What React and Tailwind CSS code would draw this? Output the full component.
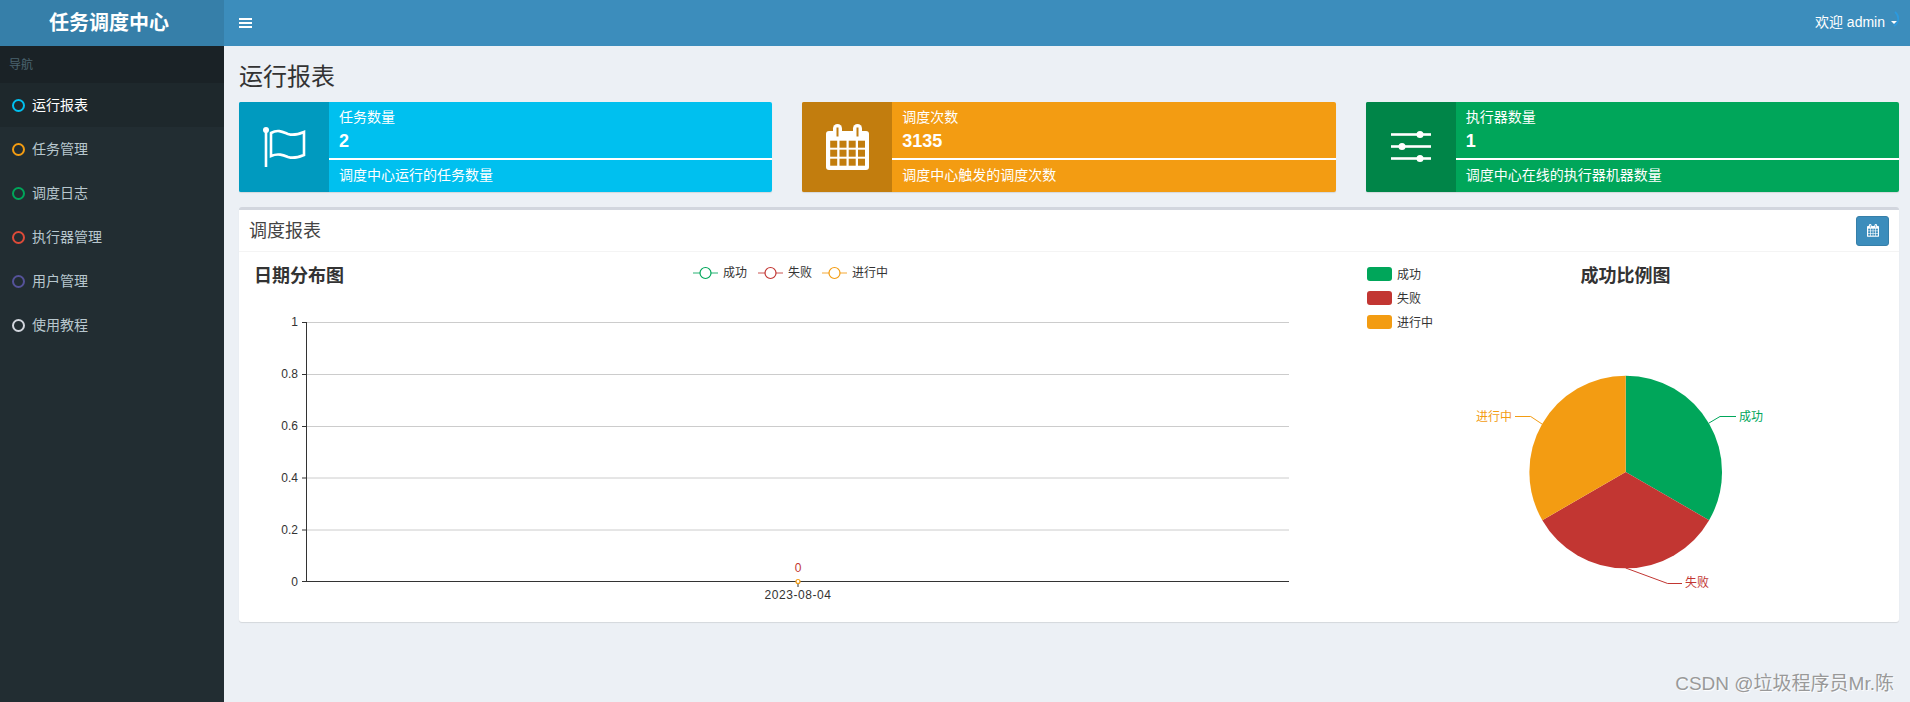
const font = { fontFamily: '"Liberation Sans", "Noto Sans CJK SC", sans-serif' };

const navItems = [
  { label: '运行报表', ring: 'border-[#00c0ef]', active: true },
  { label: '任务管理', ring: 'border-[#f39c12]' },
  { label: '调度日志', ring: 'border-[#00a65a]' },
  { label: '执行器管理', ring: 'border-[#dd4b39]' },
  { label: '用户管理', ring: 'border-[#555299]' },
  { label: '使用教程', ring: 'border-[#d2d6de]' },
];

function BarsIcon() {
  return (
    <svg width="13" height="10" viewBox="0 0 13 10" fill="#fff">
      <rect y="0" width="13" height="2" />
      <rect y="4" width="13" height="2" />
      <rect y="8" width="13" height="2" />
    </svg>
  );
}

function FlagIcon() {
  return (
    <svg width="44" height="42" viewBox="0 0 44 42" fill="none" stroke="#fff">
      <circle cx="4" cy="4" r="3" fill="#fff" stroke="none" />
      <path d="M4 4V41" strokeWidth="2.6" />
      <path d="M9 7C16 3 21 6 26 8C32 10 37 8 42 6V29C37 31 32 33 26 31C21 29 16 27 9 30Z" strokeWidth="2.6" />
    </svg>
  );
}

// dark cells are filled with the colour behind the icon
function CalendarIcon({ size, cut }) {
  const xs = [4.2, 13.5, 22.7, 32];
  const ys = [16.7, 25.7, 34.7];
  return (
    <svg width={size} height={size * 46 / 43} viewBox="0 0 43 46">
      <rect x="0" y="7" width="43" height="39" rx="3" fill="#fff" />
      <rect x="7" y="0" width="9" height="14" rx="4.5" fill="#fff" />
      <rect x="27" y="0" width="9" height="14" rx="4.5" fill="#fff" />
      <rect x="10.5" y="3.5" width="2" height="9" fill={cut} />
      <rect x="30.5" y="3.5" width="2" height="9" fill={cut} />
      {ys.map((y) => xs.map((x) => <rect key={x + '-' + y} x={x} y={y} width="7" height="7" fill={cut} />))}
    </svg>
  );
}

function SlidersIcon() {
  return (
    <svg width="40" height="36" viewBox="0 0 40 36" fill="#fff">
      <rect x="0" y="4.2" width="40" height="2.6" />
      <rect x="0" y="16.2" width="40" height="2.6" />
      <rect x="0" y="28.2" width="40" height="2.6" />
      <circle cx="29" cy="5.5" r="3.5" />
      <circle cx="11" cy="17.5" r="3.5" />
      <circle cx="29" cy="29.5" r="3.5" />
    </svg>
  );
}

function InfoBox({ bg, iconBg, icon, title, value, desc }) {
  return (
    <div className={`flex h-[90px] overflow-hidden rounded-[2px] text-white shadow-[0_1px_1px_rgba(0,0,0,0.1)] ${bg}`}>
      <div className={`flex w-[90px] shrink-0 items-center justify-center ${iconBg}`}>{icon}</div>
      <div className="flex min-w-0 flex-1 flex-col">
        <div className="h-[26px] px-[10px] pt-[5px] text-[14px] leading-[20px]">{title}</div>
        <div className="h-[30px] px-[10px] pt-[1px] text-[18px] font-bold leading-[25px]">{value}</div>
        <div className="h-[2px] bg-white" />
        <div className="px-[10px] pt-[5px] text-[14px] leading-[20px]">{desc}</div>
      </div>
    </div>
  );
}

function LegendMark({ x, color }) {
  return (
    <g stroke={color} fill="#fff" strokeWidth="1.2">
      <path d={`M${x} 273H${x + 25}`} opacity="0.7" />
      <circle cx={x + 12.5} cy="273" r="5.5" />
    </g>
  );
}

function LineChart() {
  const ticks = [
    ['1', 322],
    ['0.8', 374],
    ['0.6', 426],
    ['0.4', 477.5],
    ['0.2', 529.5],
  ];
  return (
    <svg className="block h-[370px] w-[1111px]" viewBox="249 252 1111 370" style={font}>
      <text x="254" y="282" fontSize="18" fontWeight="700" fill="#333">日期分布图</text>

      <LegendMark x={693} color="#00a65a" />
      <text x="723" y="277" fontSize="12" fill="#333">成功</text>
      <LegendMark x={758} color="#c23632" />
      <text x="788" y="277" fontSize="12" fill="#333">失败</text>
      <LegendMark x={822} color="#f39c12" />
      <text x="852" y="277" fontSize="12" fill="#333">进行中</text>

      {ticks.map(([label, y]) => (
        <g key={label}>
          <path d={`M307 ${y + 0.5}H1289`} stroke="#ccc" />
          <path d={`M302 ${y + 0.5}H307`} stroke="#333" />
          <text x="298" y={y + 4} fontSize="12" fill="#333" textAnchor="end">{label}</text>
        </g>
      ))}
      <path d="M306.5 322V582" stroke="#333" />
      <path d="M302 581.5H1289" stroke="#333" />
      <path d="M798 582V587" stroke="#333" />
      <text x="298" y="585.5" fontSize="12" fill="#333" textAnchor="end">0</text>
      <circle cx="798" cy="581.5" r="2" fill="#fff" stroke="#f39c12" strokeWidth="1.2" />
      <text x="798" y="572" fontSize="12" fill="#c23632" textAnchor="middle">0</text>
      <text x="798" y="599" fontSize="12" letterSpacing="0.55" fill="#333" textAnchor="middle">2023-08-04</text>
    </svg>
  );
}

function PieChart() {
  const legend = [
    ['成功', '#00a65a', 267],
    ['失败', '#c23632', 291],
    ['进行中', '#f39c12', 315],
  ];
  return (
    <svg className="block h-[370px] w-[539px]" viewBox="1360 252 539 370" style={font}>
      {legend.map(([label, color, y]) => (
        <g key={label}>
          <rect x="1367" y={y} width="25" height="14" rx="3" fill={color} />
          <text x="1397" y={y + 11.5} fontSize="12" fill="#333">{label}</text>
        </g>
      ))}
      <text x="1625.5" y="282" fontSize="18" fontWeight="700" fill="#333" textAnchor="middle">成功比例图</text>

      <path d="M1625.7 472V375.7A96.3 96.3 0 0 1 1709.1 520.2Z" fill="#00a65a" />
      <path d="M1625.7 472L1709.1 520.2A96.3 96.3 0 0 1 1542.3 520.2Z" fill="#c23632" />
      <path d="M1625.7 472L1542.3 520.2A96.3 96.3 0 0 1 1625.7 375.7Z" fill="#f39c12" />

      <path d="M1709 423L1720 416.5H1736" fill="none" stroke="#00a65a" />
      <text x="1739" y="420.5" fontSize="12" fill="#00a65a">成功</text>
      <path d="M1625.7 568L1667.7 583.5H1682" fill="none" stroke="#c23632" />
      <text x="1685" y="587" fontSize="12" fill="#c23632">失败</text>
      <path d="M1542 424L1530.7 416.5H1515" fill="none" stroke="#f39c12" />
      <text x="1476" y="420.5" fontSize="12" fill="#f39c12">进行中</text>
    </svg>
  );
}

export default function App() {
  return (
    <div className="flex h-[702px] w-[1910px] overflow-hidden bg-[#ecf0f5] text-[#333]" style={font}>
      {/* Sidebar */}
      <aside className="flex w-[224px] shrink-0 flex-col bg-[#222d32]">
        <div className="flex h-[46px] items-center justify-center bg-[#367fa9] pr-[6px] text-[20px] font-bold text-white">
          任务调度中心
        </div>
        <div className="flex h-[37px] items-center bg-[#1a2226] pl-[9px] text-[12px] text-[#4b646f]">导航</div>
        {navItems.map((item) => (
          <div
            key={item.label}
            className={`flex h-[44px] items-center gap-[7px] pl-[12px] text-[14px] ${item.active ? 'bg-[#1e282c] text-white' : 'text-[#b8c7ce]'}`}
          >
            <span className={`h-[13px] w-[13px] rounded-full border-2 ${item.ring}`} />
            {item.label}
          </div>
        ))}
      </aside>

      <div className="relative flex min-w-0 flex-1 flex-col">
        {/* Top bar */}
        <header className="relative flex h-[46px] items-center justify-between bg-[#3c8dbc] pl-[15px] pr-[13px] text-white">
          <BarsIcon />
          <div className="flex -translate-y-[1px] items-center gap-[6px] text-[14px]">
            欢迎 admin
            <span className="h-0 w-0 border-x-[3.5px] border-t-[3.5px] border-x-transparent border-t-white" />
          </div>
          <svg className="absolute right-[9px] top-[11px]" width="8" height="16" viewBox="0 0 8 16" fill="none">
            <path d="M2 1C6 4 7 11 1 15" stroke="#2b9ae0" strokeWidth="1.6" />
          </svg>
        </header>

        <main className="flex flex-col pl-[15px] pr-[11px]">
          <h1 className="flex h-[56px] items-center pt-[5px] text-[24px] font-normal leading-none">运行报表</h1>

          <div className="grid grid-cols-3 gap-[30px]">
            <InfoBox bg="bg-[#00c0ef]" iconBg="bg-[#009abf]" icon={<FlagIcon />} title="任务数量" value="2" desc="调度中心运行的任务数量" />
            <InfoBox bg="bg-[#f39c12]" iconBg="bg-[#c27d0e]" icon={<CalendarIcon size={43} cut="#c27d0e" />} title="调度次数" value="3135" desc="调度中心触发的调度次数" />
            <InfoBox bg="bg-[#00a65a]" iconBg="bg-[#008548]" icon={<SlidersIcon />} title="执行器数量" value="1" desc="调度中心在线的执行器机器数量" />
          </div>

          {/* Report box */}
          <section className="mt-[15px] rounded-[3px] border-t-[3px] border-[#d2d6de] bg-white shadow-[0_1px_1px_rgba(0,0,0,0.1)]">
            <div className="flex h-[42px] items-center justify-between border-b border-[#f4f4f4] px-[10px]">
              <h3 className="pt-[1px] text-[18px] font-normal text-[#444]">调度报表</h3>
              <button className="flex h-[30px] w-[33px] items-center justify-center rounded-[3px] border border-[#367fa9] bg-[#3c8dbc]">
                <CalendarIcon size={12} cut="#3c8dbc" />
              </button>
            </div>
            <div className="flex">
              <div className="ml-[10px]"><LineChart /></div>
              <PieChart />
            </div>
          </section>
        </main>

        <div className="absolute bottom-[9px] right-[16px] text-[19px] leading-none text-[#999] [text-shadow:1px_1px_1px_#fff]">
          CSDN @垃圾程序员Mr.陈
        </div>
      </div>
    </div>
  );
}
